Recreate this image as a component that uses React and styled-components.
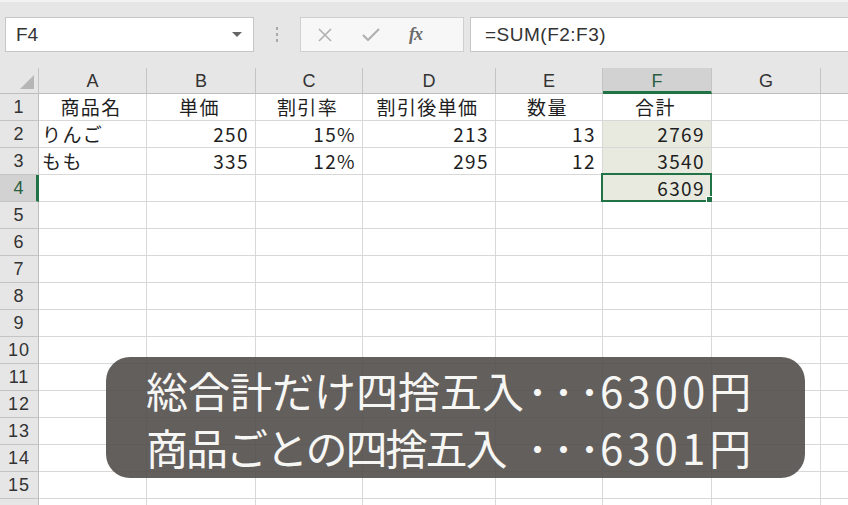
import styled, { createGlobalStyle } from "styled-components";

const GlobalStyle = createGlobalStyle`
  html, body {
    margin: 0;
    padding: 0;
    background: #ffffff;
    overflow: hidden;
  }
  body {
    font-family: "Noto Sans CJK JP", "Liberation Sans", sans-serif;
  }
`;

const COLS = [
  { key: "A", w: 108 },
  { key: "B", w: 109 },
  { key: "C", w: 107 },
  { key: "D", w: 133 },
  { key: "E", w: 107 },
  { key: "F", w: 109 },
  { key: "G", w: 109 },
  { key: "H", w: 60 },
];

const DATA = {
  1: [
    { v: "商品名", a: "center" },
    { v: "単価", a: "center" },
    { v: "割引率", a: "center" },
    { v: "割引後単価", a: "center" },
    { v: "数量", a: "center" },
    { v: "合計", a: "center" },
  ],
  2: [
    { v: "りんご", a: "left" },
    { v: "250" },
    { v: "15%" },
    { v: "213" },
    { v: "13" },
    { v: "2769" },
  ],
  3: [
    { v: "もも", a: "left" },
    { v: "335" },
    { v: "12%" },
    { v: "295" },
    { v: "12" },
    { v: "3540" },
  ],
  4: [{}, {}, {}, {}, {}, { v: "6309" }],
};

const NOTES = [
  { label: "総合計だけ四捨五入", value: "6300", tight: false },
  { label: "商品ごとの四捨五入", value: "6301", tight: true },
];

const Page = styled.div`
  position: relative;
  width: 848px;
  height: 505px;
  overflow: hidden;
`;

const Toolbar = styled.div`
  height: 68px;
  box-sizing: border-box;
  background: #e6e6e6;
  border-top: 2px solid #f3f3f3;
  display: flex;
  align-items: flex-start;
  padding-top: 15px;
`;

const NameBox = styled.div`
  margin-left: 5px;
  width: 249px;
  height: 35px;
  box-sizing: border-box;
  background: #fff;
  border: 1px solid #c6c6c6;
  display: flex;
  align-items: center;
  justify-content: space-between;
  padding: 0 11px 0 10px;
  font-family: "Liberation Sans", sans-serif;
  font-size: 19px;
  color: #333;
`;

const Caret = styled.span`
  width: 0;
  height: 0;
  border-left: 5px solid transparent;
  border-right: 5px solid transparent;
  border-top: 5px solid #666;
`;

const Grip = styled.div`
  width: 46px;
  height: 35px;
  display: flex;
  flex-direction: column;
  align-items: center;
  justify-content: center;
  gap: 3px;
  span {
    width: 2px;
    height: 3px;
    background: #a8a8a8;
  }
`;

const FuncBox = styled.div`
  width: 164px;
  height: 35px;
  box-sizing: border-box;
  background: #f7f7f7;
  border: 1px solid #cfcfcf;
  display: flex;
  align-items: center;
  padding-left: 16px;
  gap: 28px;
`;

const Fx = styled.span`
  font-family: "Liberation Serif", serif;
  font-style: italic;
  font-weight: bold;
  font-size: 18px;
  color: #6b6b6b;
  letter-spacing: -1px;
`;

const Formula = styled.div`
  margin-left: 6px;
  flex: 1;
  height: 35px;
  box-sizing: border-box;
  background: #fff;
  border: 1px solid #c6c6c6;
  border-right: none;
  display: flex;
  align-items: center;
  padding-left: 14px;
  font-family: "Liberation Sans", sans-serif;
  font-size: 19px;
  color: #333;
  letter-spacing: 0.5px;
`;

const Sheet = styled.div`
  display: flex;
  flex-direction: column;
`;

const Row = styled.div`
  display: flex;
  height: ${(p) => p.$h}px;
  min-height: 0;
  flex-shrink: 0;
  line-height: 1;
`;

const HeadCell = styled.div`
  flex: 0 0 ${(p) => p.$w}px;
  box-sizing: border-box;
  background: ${(p) => (p.$active ? "#d2d2d2" : "#e6e6e6")};
  border-right: 1px solid #c4c4c4;
  border-bottom: ${(p) => (p.$active ? "3px solid #217346" : "1px solid #bdbdbd")};
  display: flex;
  align-items: center;
  justify-content: center;
  font-family: "Liberation Sans", sans-serif;
  font-size: 18px;
  color: ${(p) => (p.$active ? "#2a5e40" : "#333")};
  padding-top: ${(p) => (p.$active ? "2px" : "0")};
`;

const Corner = styled(HeadCell)`
  position: relative;
  &::after {
    content: "";
    position: absolute;
    right: 4px;
    bottom: 4px;
    border-left: 14px solid transparent;
    border-bottom: 14px solid #b6b6b6;
  }
`;

const RowHead = styled.div`
  flex: 0 0 39px;
  box-sizing: border-box;
  background: ${(p) => (p.$active ? "#d2d2d2" : "#e6e6e6")};
  border-right: ${(p) => (p.$active ? "3px solid #217346" : "1px solid #bdbdbd")};
  border-bottom: 1px solid #c4c4c4;
  display: flex;
  align-items: center;
  justify-content: center;
  font-family: "Liberation Sans", sans-serif;
  font-size: 18px;
  letter-spacing: 1px;
  color: ${(p) => (p.$active ? "#2a5e40" : "#333")};
  padding-left: ${(p) => (p.$active ? "2px" : "0")};
`;

const Cell = styled.div`
  position: relative;
  flex: 0 0 ${(p) => p.$w}px;
  box-sizing: border-box;
  background: ${(p) => (p.$shade ? "#e9eadf" : "#fff")};
  border-right: 1px solid #d8d8d8;
  border-bottom: 1px solid #d8d8d8;
  display: flex;
  align-items: center;
  justify-content: ${(p) =>
    p.$align === "left" ? "flex-start" : p.$align === "center" ? "center" : "flex-end"};
  padding: 0 6px 1px 3px;
  font-size: 19px;
  color: #1e1e1e;
  letter-spacing: 1.4px;
  white-space: nowrap;
`;

const Active = styled.div`
  position: absolute;
  left: -2px;
  top: -2px;
  right: -1px;
  bottom: -1px;
  border: 2px solid #217346;
  pointer-events: none;
  &::after {
    content: "";
    position: absolute;
    right: -5px;
    bottom: -5px;
    width: 7px;
    height: 7px;
    background: #217346;
    border: 1px solid #fff;
  }
`;

const Note = styled.div`
  position: absolute;
  left: 106px;
  top: 357px;
  width: 699px;
  height: 121px;
  box-sizing: border-box;
  border-radius: 24px;
  background: rgba(82, 78, 74, 0.9);
  padding: 4px 0 0 40px;
  color: #f6f6f4;
  font-family: "Noto Sans CJK JP", sans-serif;
  font-size: 42px;
  line-height: 57px;
  white-space: nowrap;
`;

const NoteLine = styled.div`
  display: grid;
  grid-template-columns: 376px 82px auto;
  align-items: center;
`;

const NoteLabel = styled.span`
  letter-spacing: ${(p) => (p.$tight ? "-2px" : "0")};
`;

// leader dots, spread evenly across their column
const Dots = styled.span`
  display: flex;
  justify-content: space-between;
  padding: 0 4px 0 5px;
`;

const Amount = styled.span`
  letter-spacing: 4px;
  margin-left: -4px;
`;

function XIcon() {
  return (
    <svg width="16" height="16" viewBox="0 0 16 16">
      <path d="M2 2 L14 14 M14 2 L2 14" stroke="#b0b0b0" strokeWidth="1.6" />
    </svg>
  );
}

function CheckIcon() {
  return (
    <svg width="20" height="16" viewBox="0 0 20 16">
      <path d="M2 8 L7 13 L18 2" stroke="#b0b0b0" strokeWidth="2.2" fill="none" />
    </svg>
  );
}

const ROWS = Array.from({ length: 16 }, (_, i) => i + 1);

export default function App() {
  return (
    <Page>
      <GlobalStyle />
      <Toolbar>
        <NameBox>
          F4
          <Caret />
        </NameBox>
        <Grip>
          <span />
          <span />
          <span />
        </Grip>
        <FuncBox>
          <XIcon />
          <CheckIcon />
          <Fx>fx</Fx>
        </FuncBox>
        <Formula>=SUM(F2:F3)</Formula>
      </Toolbar>

      <Sheet>
        <Row $h={26}>
          <Corner $w={39} />
          {COLS.map((c) => (
            <HeadCell key={c.key} $w={c.w} $active={c.key === "F"}>
              {c.key === "H" ? "" : c.key}
            </HeadCell>
          ))}
        </Row>
        {ROWS.map((r) => (
          <Row key={r} $h={27}>
            <RowHead $active={r === 4}>{r <= 15 ? r : ""}</RowHead>
            {COLS.map((c, i) => {
              const cell = (DATA[r] && DATA[r][i]) || {};
              const isF = c.key === "F" && r >= 2 && r <= 4;
              return (
                <Cell key={c.key} $w={c.w} $align={cell.a} $shade={isF}>
                  {cell.v}
                  {c.key === "F" && r === 4 && <Active />}
                </Cell>
              );
            })}
          </Row>
        ))}
      </Sheet>

      <Note>
        {NOTES.map((n) => (
          <NoteLine key={n.value}>
            <NoteLabel $tight={n.tight}>{n.label}</NoteLabel>
            <Dots>
              <span>･</span>
              <span>･</span>
              <span>･</span>
            </Dots>
            <Amount>
              {n.value}
              <span>円</span>
            </Amount>
          </NoteLine>
        ))}
      </Note>
    </Page>
  );
}
